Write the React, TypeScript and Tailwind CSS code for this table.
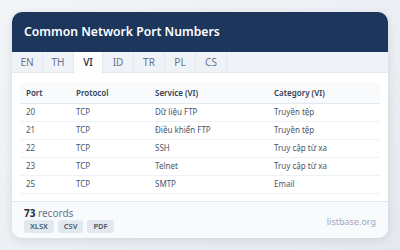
import { useState } from 'react';

const langs = ['EN', 'TH', 'VI', 'ID', 'TR', 'PL', 'CS'];

const rows = [
  { port: 20, protocol: 'TCP', service: 'Dữ liệu FTP', category: 'Truyền tệp' },
  { port: 21, protocol: 'TCP', service: 'Điều khiển FTP', category: 'Truyền tệp' },
  { port: 22, protocol: 'TCP', service: 'SSH', category: 'Truy cập từ xa' },
  { port: 23, protocol: 'TCP', service: 'Telnet', category: 'Truy cập từ xa' },
  { port: 25, protocol: 'TCP', service: 'SMTP', category: 'Email' },
];

const App = () => {
  const [lang, setLang] = useState('VI');

  return (
    <div
      className="w-[400px] h-[250px] bg-gradient-to-br from-[#f3f5f8] to-[#e5e9ef] p-3"
      style={{ fontFamily: '"Noto Sans", "Open Sans", sans-serif' }}
    >
      <div className="h-[226px] bg-white rounded-[10px] shadow-[0_2px_8px_rgba(30,41,59,0.12)] overflow-hidden flex flex-col">
        {/* Header */}
        <div className="h-10 bg-[#1c365c] flex items-center px-3">
          <h1 className="text-white text-[12.2px] font-semibold">
            Common Network Port Numbers
          </h1>
        </div>

        {/* Language tabs */}
        <div className="h-[21px] flex bg-[#eff2f7] border-b border-[#e2e8f0]">
          {langs.map((l) => (
            <button
              key={l}
              onClick={() => setLang(l)}
              className={
                l === lang
                  ? 'w-[29px] text-[10px] border-r border-[#e2e8f0] bg-white text-[#1e293b] font-medium -mb-px'
                  : 'w-[31px] text-[10px] border-r border-[#e2e8f0] text-[#64748b]'
              }
            >
              {l}
            </button>
          ))}
        </div>

        {/* Table */}
        <div className="flex-1 px-2 pt-[10px]">
          <table className="w-full text-[8px] text-left border-collapse">
            <thead>
              <tr className="bg-[#f8fafc] border-b border-[#e2e8f0] h-5">
                <th className="pl-[6px] font-semibold text-[#334155] w-[50px]">Port</th>
                <th className="pl-[6px] font-semibold text-[#334155] w-[79px]">Protocol</th>
                <th className="pl-[6px] font-semibold text-[#334155] w-[119px]">Service (VI)</th>
                <th className="pl-[6px] font-semibold text-[#334155]">Category (VI)</th>
              </tr>
            </thead>
            <tbody>
              {rows.map((r) => (
                <tr key={r.port} className="border-b border-[#eef1f5] h-[18px] text-[#475569]">
                  <td className="pl-[6px]">{r.port}</td>
                  <td className="pl-[6px]">{r.protocol}</td>
                  <td className="pl-[6px]">{r.service}</td>
                  <td className="pl-[6px]">{r.category}</td>
                </tr>
              ))}
            </tbody>
          </table>
        </div>

        {/* Footer */}
        <div className="h-[37px] bg-[#f8fafc] border-t border-[#e2e8f0] px-3 flex items-end justify-between pb-[5px]">
          <div className="flex flex-col">
            <div className="text-[10px] leading-[12px] text-[#64748b]">
              <span className="font-bold text-[#1e293b]">73</span> records
            </div>
            <div className="flex gap-1 mt-[1px]">
              {['XLSX', 'CSV', 'PDF'].map((f) => (
                <span
                  key={f}
                  className="h-[13px] px-[6px] rounded-[3px] bg-[#e2e8f0] text-[#475569] text-[7.5px] font-semibold flex items-center"
                >
                  {f}
                </span>
              ))}
            </div>
          </div>
          <span className="text-[9px] text-[#a3a9bf] mb-[5px]">listbase.org</span>
        </div>
      </div>
    </div>
  );
};

export default App;
